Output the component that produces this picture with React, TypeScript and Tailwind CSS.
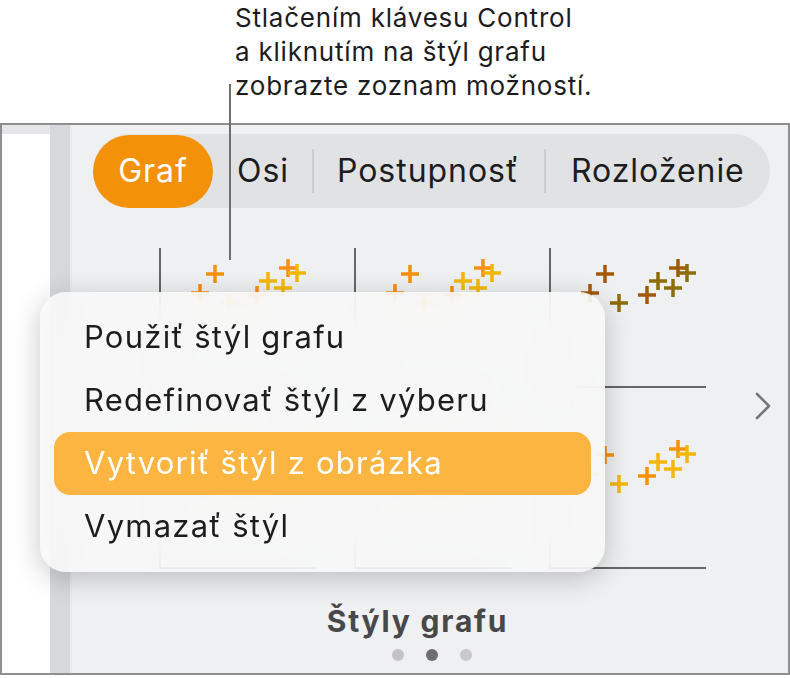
import React from "react";

type Pt = [number, number, number];

// scatter points: x, y, series index
const POINTS: Pt[] = [
  [41, 45, 0],
  [56, 26, 0],
  [70, 55, 1],
  [98, 47, 0],
  [109, 33, 1],
  [124, 40, 1],
  [129, 20, 0],
  [138, 25, 1],
];

const PALETTES: [string, string][] = [
  ["#f7900a", "#f5b800"],
  ["#f7900a", "#f5b800"],
  ["#a35a05", "#8d6d05"],
  ["#f7a11a", "#f2c21a"],
  ["#f5a623", "#e8c02a"],
  ["#f7900a", "#f5b800"],
];

const Plus = ({ x, y, color }: { x: number; y: number; color: string }) => (
  <g stroke={color} strokeWidth={3.5}>
    <line x1={x - 9} y1={y} x2={x + 9} y2={y} />
    <line x1={x} y1={y - 9} x2={x} y2={y + 9} />
  </g>
);

const Chart = ({ palette }: { palette: [string, string] }) => (
  <svg width="157" height="140" viewBox="0 0 157 140" className="block">
    <line x1="1" y1="0" x2="1" y2="139" stroke="#666" strokeWidth="2" />
    <line x1="0" y1="139" x2="157" y2="139" stroke="#666" strokeWidth="2" />
    {POINTS.map(([x, y, s], i) => (
      <Plus key={i} x={x} y={y} color={palette[s]} />
    ))}
  </svg>
);

const tabs = ["Osi", "Postupnosť", "Rozloženie"];
const menuItems = [
  "Použiť štýl grafu",
  "Redefinovať štýl z výberu",
  "Vytvoriť štýl z obrázka",
  "Vymazať štýl",
];

const App = () => {
  return (
    <div className="relative w-[790px] h-[678px] bg-white overflow-hidden font-['Inter',sans-serif]">
      <div className="h-[123px] pl-[235px] pt-[1px]">
        <p className="text-[26px] leading-[34px] tracking-[0.03em] text-[#1c1c1e]">
          Stlačením klávesu Control
          <br />
          a kliknutím na štýl grafu
          <br />
          zobrazte zoznam možností.
        </p>
      </div>

      <div className="absolute left-[229px] top-[84px] w-[2px] h-[176px] bg-[#6f6f6f] z-20" />

      <div className="relative h-[552px] border-2 border-[#8f8f8f] flex">
        <div className="w-[48px] bg-[#e6e6e8] pt-[9px]">
          <div className="h-full bg-white" />
        </div>
        <div className="w-[20px] bg-[#d7d8db]" />
        <div className="w-[2px] bg-[#e9eaec]" />

        <div className="flex-1 bg-[#eff0f2] flex flex-col pt-[9px] pl-[21px] pr-[18px]">
          <div className="h-[74px] rounded-full bg-[#e1e2e4] flex items-center text-[32px] tracking-[0.03em] text-[#1d1d1f]">
            <div className="w-[120px] h-[73px] rounded-full bg-[#f39208] text-white flex items-center justify-center">
              Graf
            </div>
            <div className="pl-[24px] pr-[23px]">{tabs[0]}</div>
            <div className="w-[2px] h-[44px] bg-[#cbccce]" />
            <div className="pl-[23px] pr-[25px]">{tabs[1]}</div>
            <div className="w-[2px] h-[44px] bg-[#cbccce]" />
            <div className="pl-[25px]">{tabs[2]}</div>
          </div>

          <div className="flex items-center mt-[40px]">
            <div className="ml-[66px] grid grid-cols-3 gap-x-[38px] gap-y-[41px]">
              {PALETTES.map((p, i) => (
                <Chart key={i} palette={p} />
              ))}
            </div>
            <svg width="16" height="28" viewBox="0 0 16 28" className="ml-auto mr-[-1px] mt-[-6px]">
              <path d="M2 2 L14 14 L2 26" fill="none" stroke="#767678" strokeWidth="2.6" strokeLinecap="round" strokeLinejoin="round" />
            </svg>
          </div>

          <div className="mt-[34px] text-center pr-[28px] text-[30px] leading-[36px] tracking-[0.06em] font-bold text-[#48484a]">
            Štýly grafu
          </div>
          <div className="flex justify-center gap-[22px] mt-[10px]">
            <span className="w-[12px] h-[12px] rounded-full bg-[#c3c3c5]" />
            <span className="w-[12px] h-[12px] rounded-full bg-[#6e6e70]" />
            <span className="w-[12px] h-[12px] rounded-full bg-[#c9c9cb]" />
          </div>
        </div>

        <div className="absolute left-[38px] top-[167px] w-[565px] pt-[14px] pb-[14px] px-[14px] rounded-[26px] bg-[#f8f8f8]/85 backdrop-blur-xl shadow-[0_6px_28px_rgba(0,0,0,0.22)] z-10">
          {menuItems.map((m, i) => (
            <div
              key={m}
              className={
                "h-[63px] flex items-center pl-[30px] rounded-[16px] text-[31px] tracking-[0.04em] " +
                (i === 2 ? "bg-[#fbb540] text-white" : "text-[#1d1d1f]")
              }
            >
              {m}
            </div>
          ))}
        </div>
      </div>
    </div>
  );
};

export default App;
